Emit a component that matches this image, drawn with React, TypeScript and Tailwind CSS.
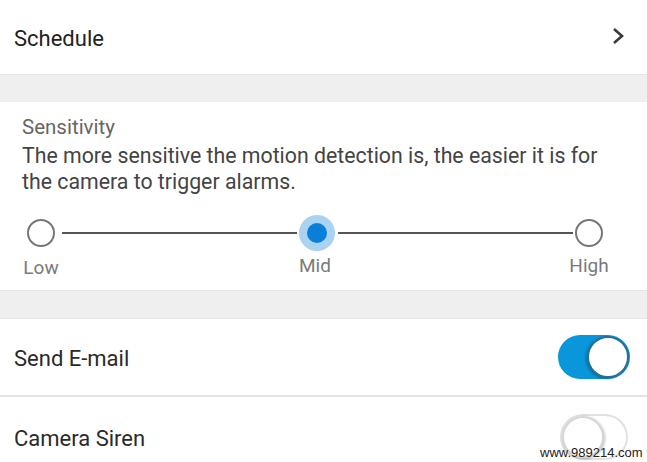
import React from 'react';

const font = { fontFamily: 'Roboto, "Noto Sans", sans-serif' };

const Toggle: React.FC<{ on: boolean }> = ({ on }) =>
  on ? (
    <div className="flex h-[44px] w-[72px] items-center justify-end rounded-full bg-[#0a96da] pr-[1px]">
      <div className="h-[42px] w-[42px] rounded-full border-2 border-[#2a6f94] bg-white shadow-[-1px_1px_3px_rgba(0,0,0,0.3)]" />
    </div>
  ) : (
    <div className="flex h-[46px] w-[68px] items-center rounded-full border-2 border-[#e2e2e2] bg-white">
      <div className="h-[42px] w-[42px] rounded-full border-2 border-[#d6d6d6] bg-white shadow-[1px_1px_3px_rgba(0,0,0,0.25)]" />
    </div>
  );

const Band = () => <div className="h-[28px] border-t border-[#e3e3e3] bg-[#efefef]" />;

export default function App() {
  return (
    <div className="relative h-[462px] w-[647px] overflow-hidden bg-white" style={font}>
      {/* Schedule row */}
      <div className="flex h-[74px] items-center justify-between pl-[14px] pr-[22px]">
        <span className="mt-[3px] text-[22px] text-[#222]">Schedule</span>
        <svg width="14" height="18" viewBox="0 0 14 18" className="-mt-[2px]">
          <polyline points="3,2 11,9 3,16" fill="none" stroke="#3a3a3a" strokeWidth="2.6" />
        </svg>
      </div>

      <Band />

      {/* Sensitivity */}
      <div className="h-[188px] pt-[13px]">
        <div className="px-[22px]">
          <div className="text-[20.5px] leading-[24px] text-[#666]">Sensitivity</div>
          <p className="mt-[4px] text-[21.3px] leading-[26px] text-[#444]">
            The more sensitive the motion detection is, the easier it is for the camera to trigger alarms.
          </p>
        </div>
        <div className="mt-[20px] flex h-[36px] items-center pl-[27px] pr-[44px]">
          <div className="h-[28px] w-[28px] rounded-full border-2 border-[#777]" />
          <div className="ml-[7px] mr-[2px] h-[2px] flex-1 bg-[#555]" />
          <div className="flex h-[36px] w-[36px] items-center justify-center rounded-full bg-[#a9d3f0]">
            <div className="h-[20px] w-[20px] rounded-full bg-[#0a7fd8]" />
          </div>
          <div className="ml-[3px] mr-[2px] h-[2px] flex-1 bg-[#555]" />
          <div className="h-[28px] w-[28px] rounded-full border-2 border-[#777]" />
        </div>
        <div className="mt-[4px] flex justify-between pl-[19px] pr-[36px] text-[19px] leading-[22px] text-[#7a7a7a]">
          <span className="w-[44px] pt-[2px] text-center">Low</span>
          <span className="w-[44px] text-center">Mid</span>
          <span className="w-[44px] text-center">High</span>
        </div>
      </div>

      <Band />

      {/* Send E-mail */}
      <div className="flex h-[77px] items-center justify-between border-t border-[#e6e6e6] pl-[14px] pr-[17px]">
        <span className="mt-[2px] text-[22px] text-[#2a2a2a]">Send E-mail</span>
        <Toggle on />
      </div>

      {/* Camera Siren */}
      <div className="flex h-[80px] items-center justify-between border-t-2 border-[#e3e3e3] pl-[14px] pr-[19px] pt-[2px]">
        <span className="mt-[2px] text-[22px] text-[#2a2a2a]">Camera Siren</span>
        <Toggle on={false} />
      </div>

      <span
        className="absolute bottom-[2px] left-[540px] text-[13px] leading-[14px] text-[#222]"
        style={{ fontFamily: '"Liberation Sans", sans-serif' }}
      >
        www.989214.com
      </span>
    </div>
  );
}
